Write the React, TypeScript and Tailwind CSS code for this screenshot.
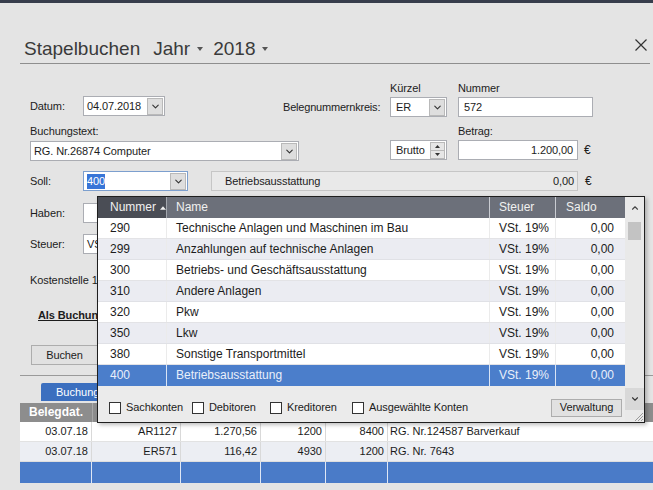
import { ChevronDown, ChevronUp } from "lucide-react";

const accounts = [
  { nr: "290", name: "Technische Anlagen und Maschinen im Bau" },
  { nr: "299", name: "Anzahlungen auf technische Anlagen" },
  { nr: "300", name: "Betriebs- und Geschäftsausstattung" },
  { nr: "310", name: "Andere Anlagen" },
  { nr: "320", name: "Pkw" },
  { nr: "350", name: "Lkw" },
  { nr: "380", name: "Sonstige Transportmittel" },
  { nr: "400", name: "Betriebsausstattung" },
];

const bookings = [
  ["03.07.18", "AR1127", "1.270,56", "1200", "8400", "RG. Nr.124587 Barverkauf"],
  ["03.07.18", "ER571", "116,42", "4930", "1200", "RG. Nr. 7643"],
  ["", "", "", "", "", ""],
];

function Caret() {
  return (
    <svg width="6" height="4" viewBox="0 0 6 4" className="ml-[7px] mt-[1px]">
      <path d="M0 0h6L3 4z" fill="#555" />
    </svg>
  );
}

function DropBtn() {
  return (
    <div className="ml-auto mr-px h-[17px] w-[16px] shrink-0 border border-[#b9b9b9] bg-[#dedede] flex items-center justify-center">
      <ChevronDown size={11} strokeWidth={2.4} color="#333" />
    </div>
  );
}

function Check({ label, w }: { label: string; w: string }) {
  return (
    <div className={`flex items-center ${w}`}>
      <div className="w-[12px] h-[12px] bg-white border border-[#333]" />
      <span className="ml-[5px] whitespace-nowrap">{label}</span>
    </div>
  );
}

export default function App() {
  return (
    <div className="w-[653px] h-[490px] relative overflow-hidden bg-[#e4e4e4] text-[12px] leading-[15px] text-[#1c1c1c] font-['Liberation_Sans',Arial,sans-serif]">
      <div className="h-[3px] bg-[#373d4c]" />

      {/* title */}
      <div className="mt-[31px] h-[28px] flex items-center pl-[24px] pr-[6px] text-[19px] text-[#3a3a3a]">
        <span>Stapelbuchen</span>
        <span className="ml-[13px]">Jahr</span>
        <Caret />
        <span className="ml-[10px]">2018</span>
        <Caret />
        <svg width="12" height="12" viewBox="0 0 12 12" className="ml-auto mb-[6px]">
          <path d="M0.5 0.5l11 11M11.5 0.5l-11 11" stroke="#333" strokeWidth="1.2" />
        </svg>
      </div>
      <div className="mt-px h-px bg-[#8e8e8e] ml-[20px] mr-[3px]" />

      {/* form */}
      <div className="pl-[30px] text-[11px] tracking-[-0.1px]">
        <div className="mt-[16px] h-[37px] flex items-end">
          <div className="flex items-center mb-px">
            <span className="w-[53px]">Datum:</span>
            <div className="w-[82px] h-[20px] bg-white border border-[#abadb3] flex items-center pl-[3px]">
              04.07.2018
              <DropBtn />
            </div>
          </div>
          <span className="ml-[118px] w-[107px] h-[20px] flex items-center whitespace-nowrap tracking-[-0.2px]">Belegnummernkreis:</span>
          <div className="w-[68px] flex flex-col">
            <span className="h-[16px]">Kürzel</span>
            <div className="w-[57px] h-[20px] bg-white border border-[#abadb3] flex items-center pl-[5px]">
              ER
              <DropBtn />
            </div>
          </div>
          <div className="flex flex-col">
            <span className="h-[16px]">Nummer</span>
            <div className="w-[135px] h-[20px] bg-white border border-[#abadb3] flex items-center pl-[5px]">572</div>
          </div>
        </div>

        <div className="mt-[7px] flex items-end">
          <div className="flex flex-col">
            <span className="h-[17px]">Buchungstext:</span>
            <div className="w-[269px] h-[20px] bg-white border border-[#abadb3] flex items-center pl-[3px]">
              RG. Nr.26874 Computer
              <DropBtn />
            </div>
          </div>
          <div className="ml-[91px] mb-px w-[57px] h-[20px] bg-white border border-[#abadb3] flex items-center pl-[5px]">
            Brutto
            <div className="ml-auto mr-px h-[17px] w-[15px] border border-[#b9b9b9] bg-[#e6e6e6] flex flex-col">
              <div className="flex-1 flex items-center justify-center border-b border-[#b9b9b9]">
                <svg width="5" height="3" viewBox="0 0 5 3"><path d="M0 3h5L2.5 0z" fill="#333" /></svg>
              </div>
              <div className="flex-1 flex items-center justify-center">
                <svg width="5" height="3" viewBox="0 0 5 3"><path d="M0 0h5L2.5 3z" fill="#333" /></svg>
              </div>
            </div>
          </div>
          <div className="ml-[11px] mb-px flex flex-col">
            <span className="h-[16px]">Betrag:</span>
            <div className="w-[120px] h-[20px] bg-white border border-[#abadb3] flex items-center justify-end pr-[4px]">1.200,00</div>
          </div>
          <span className="ml-[6px] mb-[3px] text-[12px]">€</span>
        </div>

        <div className="mt-[10px] flex items-center">
          <span className="w-[53px]">Soll:</span>
          <div className="w-[105px] h-[20px] bg-white border border-[#7c9fce] flex items-center pl-[3px]">
            <span className="bg-[#3875d7] text-white">400</span>
            <DropBtn />
          </div>
          <div className="ml-[23px] w-[367px] h-[20px] bg-[#e9e9e9] border border-[#c6c6c6] flex items-center pl-[13px] pr-[3px]">
            Betriebsausstattung
            <span className="ml-auto">0,00</span>
          </div>
          <span className="ml-[7px] text-[12px]">€</span>
        </div>

        <div className="mt-[12px] flex items-center">
          <span className="w-[53px]">Haben:</span>
          <div className="w-[105px] h-[20px] bg-white border border-[#abadb3]" />
        </div>

        <div className="mt-[11px] flex items-center">
          <span className="w-[53px]">Steuer:</span>
          <div className="w-[105px] h-[20px] bg-white border border-[#abadb3] flex items-center pl-[3px]">
            <span className="whitespace-nowrap">VS</span>
          </div>
        </div>

        <div className="mt-[19px] h-[15px] whitespace-nowrap">Kostenstelle 1</div>
        <div className="mt-[20px] h-[15px] ml-[8px] whitespace-nowrap font-bold underline">Als Buchun</div>
        <div className="mt-[22px] ml-px w-[67px] h-[20px] bg-[#e1e1e1] border border-[#adadad] flex items-center justify-center">
          Buchen
        </div>
      </div>

      <div className="mt-[10px] h-px bg-[#9a9a9a] ml-[20px]" />

      {/* tab + table */}
      <div className="mt-[7px] ml-[41px] w-[90px] h-[18px] bg-[#3b6fbf] rounded-t-[2px] text-white text-[11px] pl-[15px] pt-[2px] whitespace-nowrap">
        Buchungen
      </div>
      <div className="mt-[2px] ml-[20px] text-[11px]">
        <div className="h-[19px] flex bg-[#8d8d8d] text-white font-bold text-[12px]">
          <div className="w-[72px] pl-[9px] flex items-center">Belegdat.</div>
          <div className="flex-1 border-l border-[#a8a8a8]" />
        </div>
        {bookings.map((r, i) => {
          const row = i === 2 ? "h-[21px] bg-[#4a7bc8]" : i === 1 ? "h-[20px] bg-[#eceef3] border-b border-[#dedede]" : "h-[20px] bg-white border-b border-[#e2e2e2]";
          const sep = i === 2 ? "border-r border-[#dfe7f5]" : "border-r border-[#d9d9d9]";
          return (
            <div key={i} className={`flex ${row}`}>
              <div className={`w-[72px] flex items-center justify-end pr-[3px] ${sep}`}>{r[0]}</div>
              <div className={`w-[89px] flex items-center justify-end pr-[3px] ${sep}`}>{r[1]}</div>
              <div className={`w-[80px] flex items-center justify-end pr-[3px] ${sep}`}>{r[2]}</div>
              <div className={`w-[65px] flex items-center justify-end pr-[3px] ${sep}`}>{r[3]}</div>
              <div className={`w-[62px] flex items-center justify-end pr-[3px] ${sep}`}>{r[4]}</div>
              <div className="flex-1 flex items-center pl-[2px] whitespace-nowrap">{r[5]}</div>
            </div>
          );
        })}
      </div>

      {/* account lookup popup */}
      <div className="absolute left-[97px] top-[196px] w-[548px] h-[227px] border border-[#1f1f1f] bg-[#ebebeb] flex shadow-[2px_2px_4px_rgba(0,0,0,0.25)]">
        <div className="w-[527px] flex flex-col">
          <div className="h-[21px] flex text-[#f0f0f0]">
            <div className="w-[68px] bg-[#4a4d55] pl-[12px] flex items-center">
              Nummer
              <svg width="7" height="4" viewBox="0 0 7 4" className="ml-[4px]"><path d="M0 4h7L3.5 0z" fill="#f0f0f0" /></svg>
            </div>
            <div className="w-[323px] bg-[#6c707a] border-l border-[#a3a7ae] pl-[9px] flex items-center">Name</div>
            <div className="w-[66px] bg-[#6c707a] border-l border-[#c9ccd2] pl-[9px] flex items-center">Steuer</div>
            <div className="w-[70px] bg-[#6c707a] border-l border-[#c9ccd2] pl-[10px] flex items-center">Saldo</div>
          </div>
          {accounts.map((a, i) => {
            const sel = i === accounts.length - 1;
            const bg = sel ? "bg-[#4b7ecb] text-[#e9effa]" : i % 2 === 1 ? "bg-[#ebecf2] border-b border-[#e0e1e6]" : "bg-white border-b border-[#e3e3e6]";
            const sep = sel ? "border-l border-[#d9e4f5]" : "border-l border-[#ebebeb]";
            return (
              <div key={a.nr} className={`h-[21px] flex ${bg}`}>
                <div className="w-[68px] pl-[12px] flex items-center">{a.nr}</div>
                <div className={`w-[323px] pl-[9px] flex items-center ${sep}`}>{a.name}</div>
                <div className={`w-[66px] pl-[9px] flex items-center ${sep}`}>VSt. 19%</div>
                <div className={`w-[70px] pr-[11px] flex items-center justify-end ${sep}`}>0,00</div>
              </div>
            );
          })}
          <div className="flex-1 flex items-center pt-[7px] pl-[11px] pr-[3px] text-[11px] tracking-[-0.1px]">
            <Check label="Sachkonten" w="w-[83px]" />
            <Check label="Debitoren" w="w-[78px]" />
            <Check label="Kreditoren" w="w-[82px]" />
            <Check label="Ausgewählte Konten" w="w-[150px]" />
            <div className="ml-auto w-[71px] h-[18px] bg-[#e1e1e1] border border-[#adadad] flex items-center justify-center">
              Verwaltung
            </div>
          </div>
        </div>
        <div className="w-[19px] flex flex-col bg-[#e9e9e9]">
          <div className="h-[21px] flex items-center justify-center">
            <ChevronUp size={10} strokeWidth={2.6} color="#444" />
          </div>
          <div className="mx-[3px] mt-[4px] h-[18px] bg-[#c3c3c3]" />
          <div className="flex-1" />
          <div className="h-[22px] bg-[#d8d8d8] flex items-center justify-center">
            <ChevronDown size={10} strokeWidth={2.6} color="#333" />
          </div>
          <div className="h-[12px] flex justify-end items-end">
            <svg width="12" height="12" viewBox="0 0 12 12">
              <path d="M11 3L3 11M11 6L6 11M11 9L9 11" stroke="#9a9a9a" strokeWidth="1" />
            </svg>
          </div>
        </div>
      </div>
    </div>
  );
}
